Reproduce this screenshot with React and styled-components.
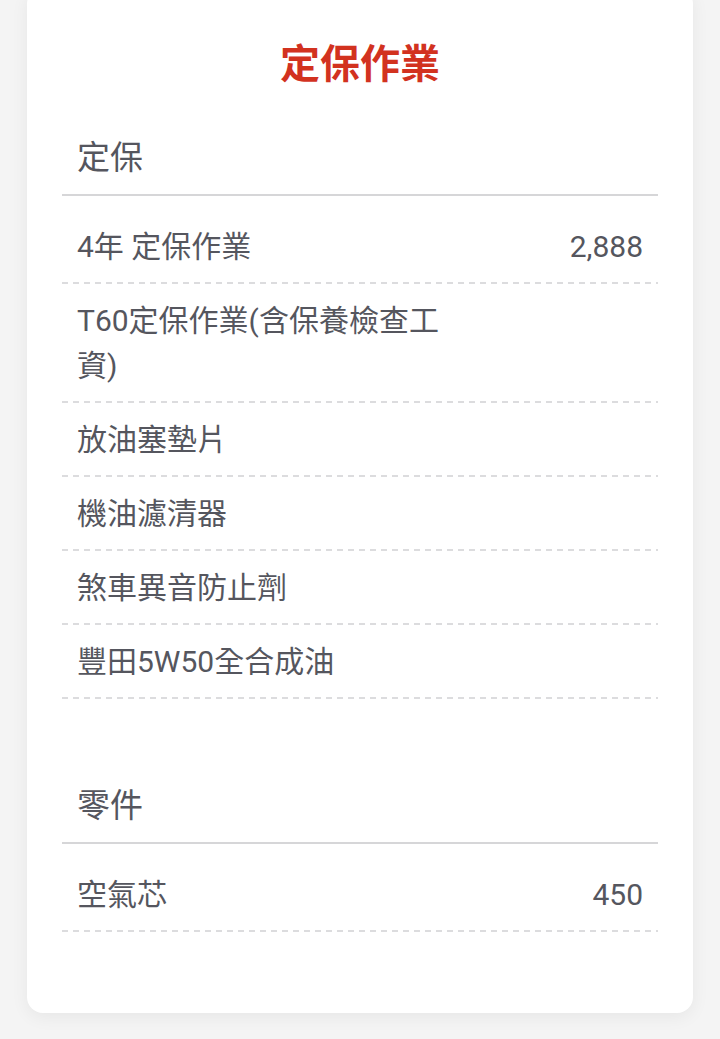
import React from "react";
import styled, { createGlobalStyle } from "styled-components";

const Global = createGlobalStyle`
  html, body {
    margin: 0;
    padding: 0;
    background: #f4f4f4;
  }
  body {
    font-family: Roboto, "Noto Sans CJK TC", sans-serif;
    color: #55565e;
  }
`;

const Page = styled.div`
  padding: 0 27px 26px;
`;

const Card = styled.div`
  margin-top: -12px;
  background: #ffffff;
  border-radius: 16px;
  box-shadow: 0 4px 18px rgba(0, 0, 0, 0.06);
  padding: 49px 35px 81px;
`;

const Title = styled.h1`
  margin: 0 0 41px;
  text-align: center;
  color: #d2321f;
  font-size: 40px;
  font-weight: 700;
  line-height: 56px;
`;

const Section = styled.section`
  & + & {
    margin-top: 83px;
  }
`;

const SectionHeader = styled.h2`
  margin: 0;
  padding: 0 15px 12px;
  font-size: 33px;
  font-weight: 400;
  line-height: 48px;
  color: #55565e;
  border-bottom: 2px solid #d6d6d8;
`;

const List = styled.ul`
  list-style: none;
  margin: 14px 0 0;
  padding: 0;
`;

const Row = styled.li`
  display: flex;
  justify-content: space-between;
  align-items: flex-start;
  padding: 14px 15px 15px;
  font-size: 30px;
  line-height: 45px;
  background-image: repeating-linear-gradient(
    to right,
    #dcdcde 0 6px,
    transparent 6px 11px
  );
  background-size: 100% 2px;
  background-repeat: no-repeat;
  background-position: left bottom;
`;

const Name = styled.span`
  max-width: 375px;
`;

const Price = styled.span`
  text-align: right;
`;

const sections = [
  {
    title: "定保",
    items: [
      { name: "4年 定保作業", price: "2,888" },
      { name: "T60定保作業(含保養檢查工資)", price: "" },
      { name: "放油塞墊片", price: "" },
      { name: "機油濾清器", price: "" },
      { name: "煞車異音防止劑", price: "" },
      { name: "豐田5W50全合成油", price: "" },
    ],
  },
  {
    title: "零件",
    items: [{ name: "空氣芯", price: "450" }],
  },
];

export default function App() {
  return (
    <>
      <Global />
      <Page>
        <Card>
          <Title>定保作業</Title>
          {sections.map((s) => (
            <Section key={s.title}>
              <SectionHeader>{s.title}</SectionHeader>
              <List>
                {s.items.map((it) => (
                  <Row key={it.name}>
                    <Name>{it.name}</Name>
                    {it.price && <Price>{it.price}</Price>}
                  </Row>
                ))}
              </List>
            </Section>
          ))}
        </Card>
      </Page>
    </>
  );
}
